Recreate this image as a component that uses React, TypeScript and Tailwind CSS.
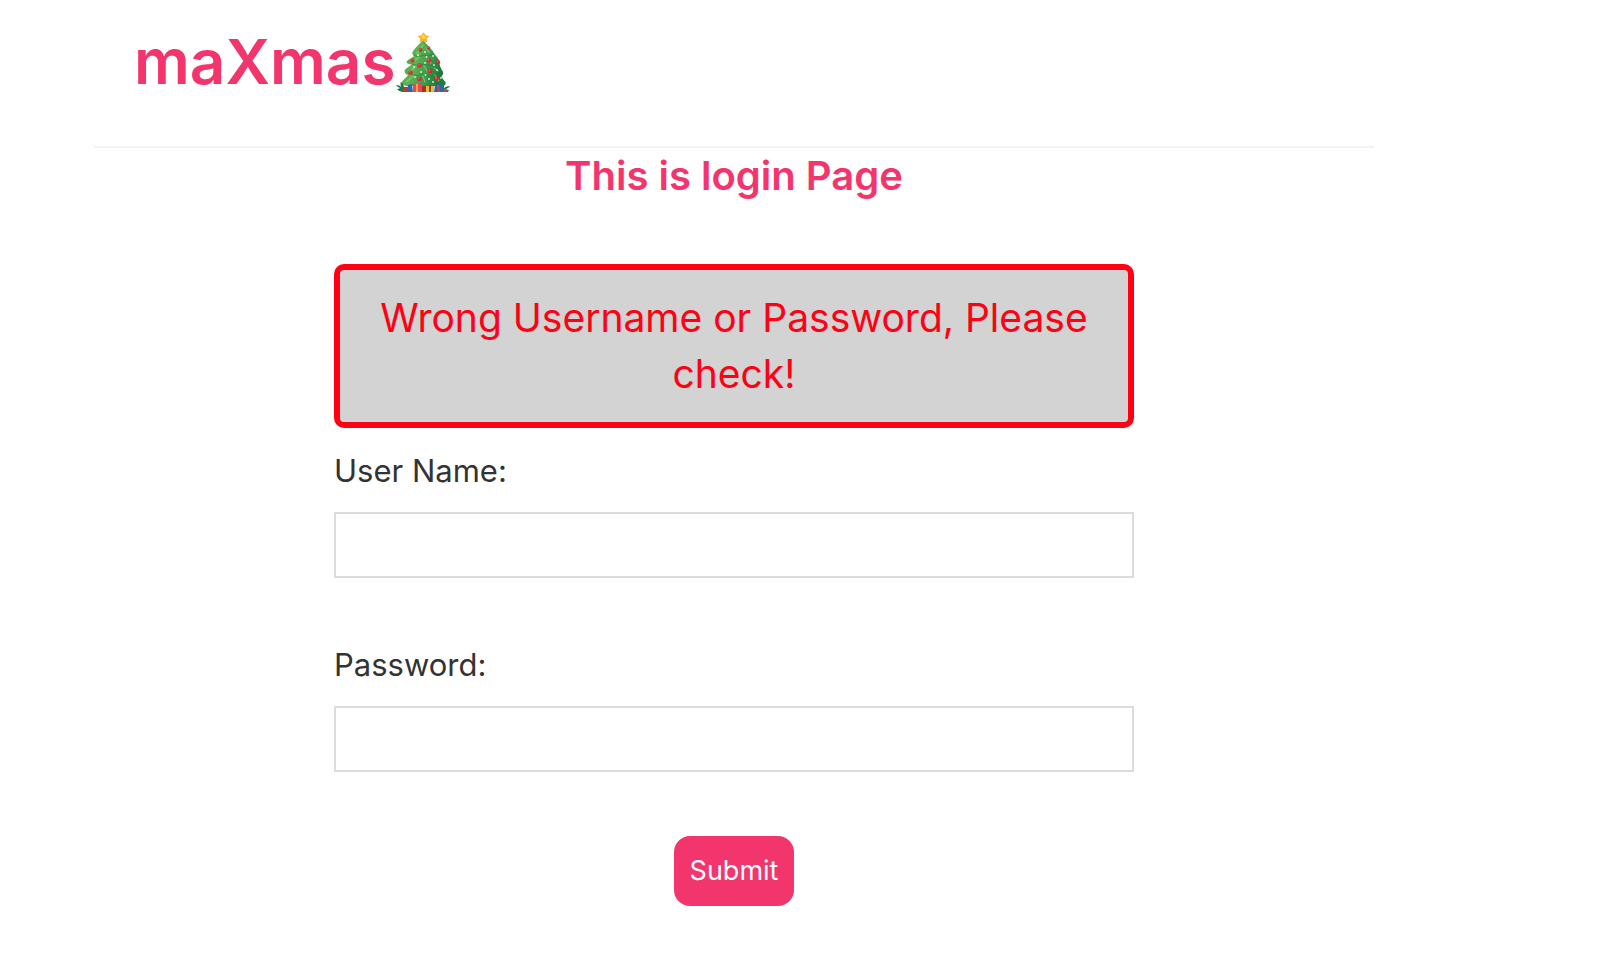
import type { InputHTMLAttributes } from 'react';

const baubles: [number, number, number][] = [
  [24.5, 18, 1.9], [32.5, 16, 1.8], [16.5, 28.5, 2], [33, 28.5, 2.3], [23.5, 33.5, 2.3],
  [42, 30, 1.9], [14.5, 40.5, 2.3], [34, 39, 2.4], [23.5, 47, 2.3], [40.5, 46.5, 2.3],
];

const lights: [number, number][] = [
  [29, 20], [22, 23], [30.5, 25], [37, 24], [29, 31], [38, 33], [18, 35],
  [25, 40], [41, 38], [29.5, 43], [19, 45], [33, 47], [45, 46], [37, 50],
];

function ChristmasTree() {
  return (
    <svg viewBox="0 0 54 60" className="h-[60px] w-[54px] shrink-0" aria-hidden="true">
      <defs>
        <linearGradient id="leaves" x1="0" x2="1" y1="0" y2="0.3">
          <stop offset="0" stopColor="#3c9a45" />
          <stop offset="0.4" stopColor="#5fb552" />
          <stop offset="0.7" stopColor="#3f9c4c" />
          <stop offset="1" stopColor="#1f7a3b" />
        </linearGradient>
      </defs>
      <path
        fill="url(#leaves)"
        d="M27.500 8C24 11 19 16 16.500 20C16 22 17 23.500 18 24C16 26 11 28 10.500 30C11 32 14 32.500 16 32.500C14 34 10 36 8.500 38.500C8.500 41 10 42.500 12 43C11 45 7 48 5.500 50.500C6 53 9 54 12 54L46 54C49 54 50 52 49.500 50C47.500 48 46 46 45.500 44C47 43 47.500 42 47 40C46 38 44 35 43.500 32C44.500 31 44.500 30 43.500 29C42 26 40 24 38.500 22C37 18 31 13 27.500 8Z"
      />
      <g fill="none" stroke="#217538" strokeWidth="1.200" strokeLinecap="round" opacity="0.45">
        <path d="M18 23Q23 26 27 23Q33 25 37 22" />
        <path d="M16 32Q23 35 28 32Q36 35 42 31" />
        <path d="M14 42Q21 45 27 42Q36 46 45 42" />
      </g>
      <g fill="none" stroke="#94d47c" strokeWidth="1.400" strokeLinecap="round" opacity="0.6">
        <path d="M27 13Q24 19 21 21M30 16L33 20" />
        <path d="M23 25Q20 28 17 29M31 27L35 31" />
        <path d="M20 34Q17 38 13 39M28 34L31 39M38 36L42 39" />
        <path d="M17 44Q14 47 10 50M27 44L29 50M39 43L43 49" />
      </g>
      {lights.map(([x, y]) => (
        <circle key={`${x}-${y}`} cx={x} cy={y} r="0.9" fill="#e6f5d0" />
      ))}
      {baubles.map(([x, y, r]) => (
        <g key={`${x}-${y}`}>
          <circle cx={x} cy={y} r={r} fill="#cf2f3a" />
          <circle cx={x - 0.5} cy={y - 0.6} r={r * 0.35} fill="#f06b63" />
        </g>
      ))}
      <path fill="#1c7a4c" d="M0 53Q4 53 5 55Q4 51 5 50Q8 52 8 55L11 60H6Q2 59 1 57Q3 57 4 56Q1 55 0 53Z" />
      <path fill="#1c7a4c" d="M54 54Q50 54 48 56Q49 53 47 51Q44 53 44 56L43 60H52L53 58Q51 58 50 57Q53 56 54 54Z" />
      <path fill="#c8352f" d="M7 55H12V60H7Z" />
      <path fill="#2869ac" d="M12 53L16 52L17 60H11Z" />
      <path fill="#e8484f" d="M17 52H26V60H17Z" />
      <path fill="#f8a351" d="M20 52H22V60H20Z" />
      <path fill="#a33226" d="M26 54H30V60H26Z" />
      <path fill="#f2b32f" d="M30 54H38V60H30Z" />
      <path fill="#8a4a20" d="M33 53H35V60H33Z" />
      <path fill="#2869ac" d="M39 53L46 52L48 60H38Z" />
      <path fill="#d9404f" d="M41 53H43L44 60H42ZM48 57H51V60H48Z" />
      <path
        fill="#f6b52c"
        stroke="#f6b52c"
        strokeWidth="1"
        strokeLinejoin="round"
        d="M27.500 0.800L29.300 3.700L32.500 4.300L30.300 6.700L31 9.700L27.500 8.500L24 9.700L24.700 6.700L22.500 4.300L25.700 3.700Z"
      />
      <path fill="#ffd75e" d="M27.500 2.500L28.700 4.800L30.500 5L28 6.800L25.500 5.500Z" />
    </svg>
  );
}

type FieldProps = InputHTMLAttributes<HTMLInputElement> & { id: string; label: string };

function Field({ id, label, ...input }: FieldProps) {
  return (
    <div className="flex flex-col gap-[18px]">
      <label htmlFor={id} className="text-[31px] leading-[46px]">
        {label}
      </label>
      <input
        id={id}
        name={id}
        className="h-[66px] w-full border-2 border-[#dcdcdc] bg-white px-4 text-[27px] outline-none focus:border-[#f2366d]"
        {...input}
      />
    </div>
  );
}

export default function App() {
  return (
    <div className="min-h-screen bg-white pr-[248px] pl-[94px] font-['Inter','Liberation_Sans',sans-serif] text-[#333333]">
      <header className="flex items-start border-b-2 border-[#f2f2f2] px-10 pt-4 pb-[38px]">
        <h1 className="text-[62px] leading-[92px] font-semibold text-[#f2366d]">maXmas</h1>
        <div className="pt-4">
          <ChristmasTree />
        </div>
      </header>
      <main>
        <h2 className="text-center text-[40px] leading-[56px] font-semibold text-[#f2366d]">
          This is login Page
        </h2>
        <form
          className="mx-auto mt-[60px] flex max-w-[800px] flex-col"
          onSubmit={(event) => event.preventDefault()}
        >
          <p
            role="alert"
            className="mb-5 rounded-[10px] border-6 border-[#ff0014] bg-[#d3d3d3] p-5 text-center text-[39px] leading-[56px] text-[#ff0014]"
          >
            Wrong Username or Password, Please check!
          </p>
          <div className="flex flex-col gap-16">
            <Field id="username" label="User Name:" type="text" autoComplete="username" />
            <Field id="password" label="Password:" type="password" autoComplete="current-password" />
            <button
              type="submit"
              className="h-[70px] self-center rounded-2xl bg-[#f2366d] px-4 text-[27px] text-white"
            >
              Submit
            </button>
          </div>
        </form>
      </main>
    </div>
  );
}
